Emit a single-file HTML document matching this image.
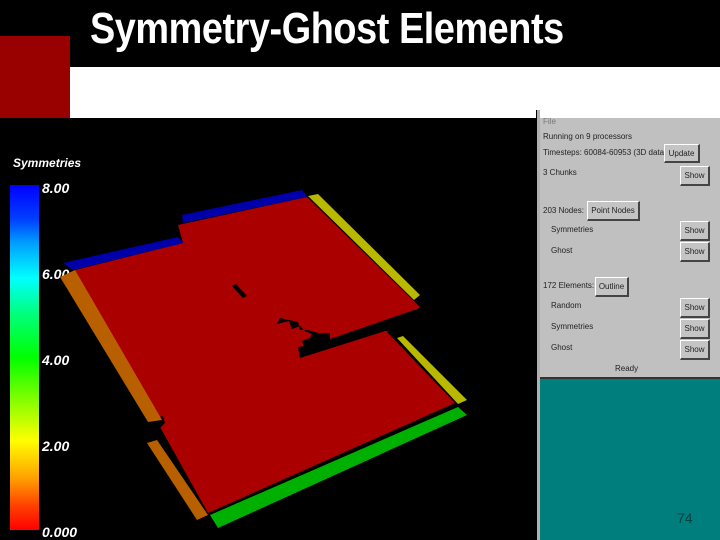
<!DOCTYPE html>
<html><head><style>
body{margin:0;width:720px;height:540px;background:#000;position:relative;overflow:hidden;font-family:"Liberation Sans",sans-serif}
.a{position:absolute}
.t{font-family:"Liberation Sans Narrow","Liberation Sans",sans-serif;font-weight:bold;color:#fff;font-size:44px;left:90px;top:4px;transform:scaleX(0.86);transform-origin:left top;white-space:nowrap;letter-spacing:-0.5px}
.p{font-size:8px;color:#222;white-space:nowrap;font-family:"Liberation Sans Narrow","Liberation Sans",sans-serif}
.b{position:absolute;background:#c4c4c4;border-top:1px solid #fff;border-left:1px solid #fff;border-right:2px solid #444;border-bottom:2px solid #444;font-size:8px;color:#222;text-align:center;box-sizing:border-box;line-height:17px;font-family:"Liberation Sans Narrow","Liberation Sans",sans-serif;white-space:nowrap}
.l{color:#fff;font-style:italic;font-weight:bold;font-size:14px}
</style></head><body>
<div class="a" style="left:0;top:36px;width:70px;height:82px;background:#990000"></div>
<div class="a" style="left:70px;top:67px;width:650px;height:51px;background:#fff"></div>
<div class="a t">Symmetry-Ghost Elements</div>

<div class="a" style="left:536px;top:118px;width:184px;height:422px;background:#007d7d"></div>
<div class="a" style="left:536px;top:110px;width:3px;height:430px;background:#b0b0b0;border-left:1px solid #000"></div>
<div class="a" style="left:540px;top:118px;width:180px;height:259px;background:#c0c0c0;border-bottom:2px solid #333"></div>
<div class="a p" style="left:543px;top:117px;color:#777">File</div>
<div class="a p" style="left:543px;top:132px">Running on 9 processors</div>
<div class="a p" style="left:543px;top:148px">Timesteps: 60084-60953 (3D data)</div>
<div class="b" style="left:664px;top:144px;width:36px;height:19px">Update</div>
<div class="a p" style="left:543px;top:168px">3 Chunks</div>
<div class="b" style="left:680px;top:166px;width:30px;height:20px">Show</div>
<div class="a p" style="left:543px;top:206px">203 Nodes:</div>
<div class="b" style="left:587px;top:201px;width:53px;height:20px">Point Nodes</div>
<div class="a p" style="left:551px;top:225px">Symmetries</div>
<div class="b" style="left:680px;top:221px;width:30px;height:20px">Show</div>
<div class="a p" style="left:551px;top:246px">Ghost</div>
<div class="b" style="left:680px;top:242px;width:30px;height:20px">Show</div>
<div class="a p" style="left:543px;top:281px">172 Elements:</div>
<div class="b" style="left:595px;top:277px;width:34px;height:20px">Outline</div>
<div class="a p" style="left:551px;top:301px">Random</div>
<div class="b" style="left:680px;top:298px;width:30px;height:20px">Show</div>
<div class="a p" style="left:551px;top:322px">Symmetries</div>
<div class="b" style="left:680px;top:319px;width:30px;height:20px">Show</div>
<div class="a p" style="left:551px;top:343px">Ghost</div>
<div class="b" style="left:680px;top:340px;width:30px;height:20px">Show</div>
<div class="a p" style="left:615px;top:364px">Ready</div>
<div class="a" style="left:677px;top:510px;font-size:14px;color:#003f3f">74</div>

<div class="a l" style="left:13px;top:156px;font-size:12px">Symmetries</div>
<div class="a" style="left:10px;top:185px;width:29px;height:345px;background:linear-gradient(#0000ff 0%,#0040ff 10%,#00a0ff 17%,#00ffff 27%,#00ff80 37%,#00ff00 50%,#80ff00 62%,#ffff00 74%,#ffa000 85%,#ff4000 93%,#ff0000 100%)"></div>
<div class="a l" style="left:42px;top:180px">8.00</div>
<div class="a l" style="left:42px;top:266px">6.00</div>
<div class="a l" style="left:42px;top:352px">4.00</div>
<div class="a l" style="left:42px;top:438px">2.00</div>
<div class="a l" style="left:42px;top:524px">0.000</div>

<svg class="a" style="left:0;top:0" width="720" height="540">
<polygon fill="#aa0000" points="75,270 183,243 178,225 307,197 420,307 387,332 455,403 208,513 160,427"/>
<polygon fill="#000" points="330,339 420,308 420,312 390,331 385,331 300,358 298,347 304,346 302,341 310,338 312,334 305,331 300,326 292,329 289,321 277,324 280,318 298,322 300,330 308,330 318,333 330,333"/>
<polygon fill="#000" points="232,286 236,284 247,296 243,298"/>
<polygon fill="#000" points="150,420 163,416 165,423 160,428 157,438 150,438"/>
<polygon fill="#0000aa" points="182,215 302,190 307,197 183,223"/>
<polygon fill="#0000aa" points="63,263 178,237 183,243 73,270"/>
<polygon fill="#b8b800" points="308,196 318,194 420,295 414,300"/>
<polygon fill="#b8b800" points="397,338 403,336 467,400 458,404"/>
<polygon fill="#b86000" points="60,277 75,270 162,420 148,422"/>
<polygon fill="#b86000" points="147,443 157,440 208,515 197,520"/>
<polygon fill="#00b000" points="210,515 458,407 467,415 218,528"/>
</svg>
</body></html>
